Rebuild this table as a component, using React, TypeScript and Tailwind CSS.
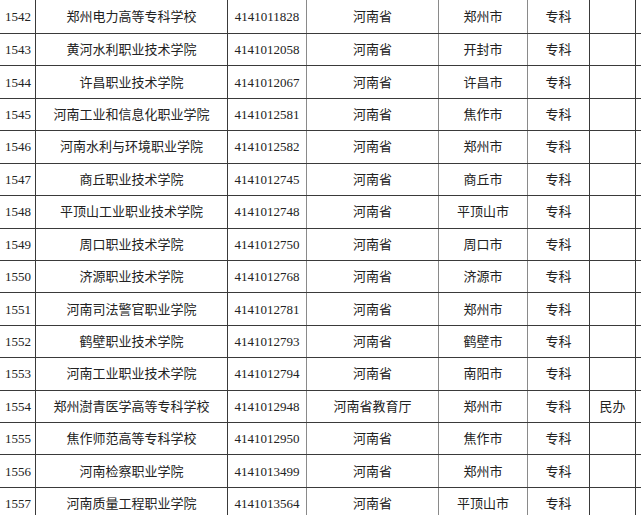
import React from "react";

const rows: string[][] = [
  ["1542", "郑州电力高等专科学校", "4141011828", "河南省", "郑州市", "专科", ""],
  ["1543", "黄河水利职业技术学院", "4141012058", "河南省", "开封市", "专科", ""],
  ["1544", "许昌职业技术学院", "4141012067", "河南省", "许昌市", "专科", ""],
  ["1545", "河南工业和信息化职业学院", "4141012581", "河南省", "焦作市", "专科", ""],
  ["1546", "河南水利与环境职业学院", "4141012582", "河南省", "郑州市", "专科", ""],
  ["1547", "商丘职业技术学院", "4141012745", "河南省", "商丘市", "专科", ""],
  ["1548", "平顶山工业职业技术学院", "4141012748", "河南省", "平顶山市", "专科", ""],
  ["1549", "周口职业技术学院", "4141012750", "河南省", "周口市", "专科", ""],
  ["1550", "济源职业技术学院", "4141012768", "河南省", "济源市", "专科", ""],
  ["1551", "河南司法警官职业学院", "4141012781", "河南省", "郑州市", "专科", ""],
  ["1552", "鹤壁职业技术学院", "4141012793", "河南省", "鹤壁市", "专科", ""],
  ["1553", "河南工业职业技术学院", "4141012794", "河南省", "南阳市", "专科", ""],
  ["1554", "郑州澍青医学高等专科学校", "4141012948", "河南省教育厅", "郑州市", "专科", "民办"],
  ["1555", "焦作师范高等专科学校", "4141012950", "河南省", "焦作市", "专科", ""],
  ["1556", "河南检察职业学院", "4141013499", "河南省", "郑州市", "专科", ""],
  ["1557", "河南质量工程职业学院", "4141013564", "河南省", "平顶山市", "专科", ""],
];

const widths = ["w-[36px]", "w-[192px]", "w-[79px]", "w-[132px]", "w-[89px]", "w-[62px]", "w-[46px]"];
const vcolors = [
  "border-r-[#3a3a3a]",
  "border-r-[#3a3a3a]",
  "border-r-[#8a8a8a]",
  "border-r-[#8a8a8a]",
  "border-r-[#8a8a8a]",
  "border-r-[#3a3a3a]",
  "border-r-[#3a3a3a]",
];

export default function App() {
  return (
    <div
      className="w-[641px] h-[515px] overflow-hidden bg-white text-[#222] text-[13px]"
      style={{ fontFamily: '"Liberation Serif", "Noto Sans CJK SC", serif' }}
    >
      <div className="flex flex-col">
        {rows.map((r, i) => (
          <div
            key={r[0]}
            className={`flex shrink-0 border-b border-b-[#3a3a3a] ${i === 0 ? "h-[34px]" : "h-[32.43px]"}`}
          >
            {r.map((c, j) => (
              <div
                key={j}
                className={`${widths[j]} shrink-0 flex items-center justify-center border-r ${vcolors[j]} whitespace-nowrap leading-none ${j === 0 ? "pl-[1px]" : ""}`}
              >
                {c}
              </div>
            ))}
            <div className="flex-1" />
          </div>
        ))}
      </div>
    </div>
  );
}
